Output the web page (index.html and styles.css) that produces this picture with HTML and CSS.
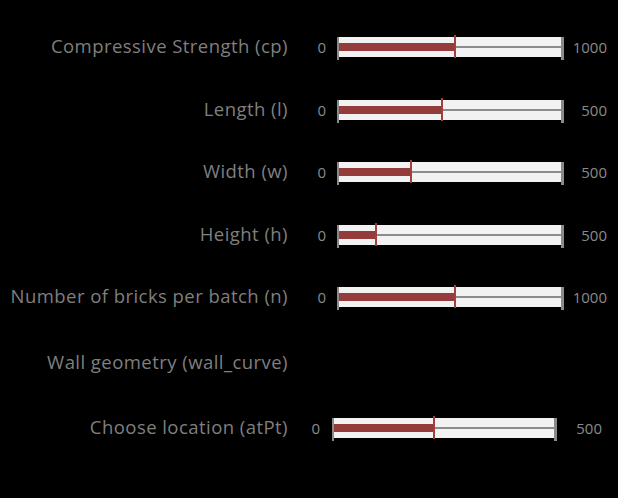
FILE: index.html
```html
<!DOCTYPE html>
<html lang="en">

<head>
    <meta charset="UTF-8">
    <meta name="viewport" content="width=device-width, initial-scale=1.0">
    <title>Brick wall parameters</title>
    <link rel="stylesheet" href="styles.css">
</head>

<body>
    <div class="panel">
        <!-- sliders -->
        <div class="row">
            <div class="label">Compressive Strength (cp)</div>
            <div class="min">0</div>
            <div class="track">
                <div class="fill" style="width: 52%"></div>
                <div class="rest"></div>
            </div>
            <div class="max">1000</div>
        </div>
        <div class="row">
            <div class="label">Length (l)</div>
            <div class="min">0</div>
            <div class="track">
                <div class="fill" style="width: 46%"></div>
                <div class="rest"></div>
            </div>
            <div class="max">500</div>
        </div>
        <div class="row">
            <div class="label">Width (w)</div>
            <div class="min">0</div>
            <div class="track">
                <div class="fill" style="width: 32%"></div>
                <div class="rest"></div>
            </div>
            <div class="max">500</div>
        </div>
        <div class="row">
            <div class="label">Height (h)</div>
            <div class="min">0</div>
            <div class="track">
                <div class="fill" style="width: 16%"></div>
                <div class="rest"></div>
            </div>
            <div class="max">500</div>
        </div>
        <div class="row">
            <div class="label">Number of bricks per batch (n)</div>
            <div class="min">0</div>
            <div class="track">
                <div class="fill" style="width: 52%"></div>
                <div class="rest"></div>
            </div>
            <div class="max">1000</div>
        </div>
        <div class="row row-tall">
            <div class="label">Wall geometry (wall_curve)</div>
        </div>
        <div class="row row-alt">
            <div class="label">Choose location (atPt)</div>
            <div class="min">0</div>
            <div class="track">
                <div class="fill" style="width: 45%"></div>
                <div class="rest"></div>
            </div>
            <div class="max">500</div>
        </div>
    </div>
</body>

</html>
```

FILE: styles.css
```css
* {
    margin: 0;
    padding: 0;
}

body {
    background: #000;
    font-family: "Open Sans", "Liberation Sans", sans-serif;
    color: #7f7f7f;
}

.panel {
    padding-top: 16px;
}

.row {
    display: grid;
    grid-template-columns: 288px 49px 227px 54px;
    align-items: center;
    height: 62.5px;
}

.row-tall {
    height: 68px;
}

.label {
    text-align: right;
    font-size: 18.5px;
    font-weight: 500;
    letter-spacing: 0.45px;
    padding-bottom: 3px;
}

.min,
.max {
    font-size: 15px;
    font-weight: 500;
    color: #8a8a8a;
}

.min {
    text-align: right;
    padding-right: 11px;
}

.max {
    text-align: right;
    padding-right: 11px;
}

.track {
    height: 20px;
    background: #f2f2f2;
    border-left: 2px solid #8a8a8a;
    border-right: 3px solid #8a8a8a;
    display: flex;
    align-items: center;
    position: relative;
}

/* ticks go a bit under the track */
.track::before,
.track::after {
    content: "";
    position: absolute;
    top: 20px;
    width: 2px;
    height: 3px;
    background: #8a8a8a;
}

.track::before {
    left: -2px;
}

.track::after {
    right: -3px;
    width: 3px;
}

.fill {
    height: 8px;
    background: #943c3c;
    position: relative;
}

.fill::after {
    content: "";
    position: absolute;
    right: -2px;
    top: -8px;
    width: 2px;
    height: 23px;
    background: #a0403f;
}

.rest {
    flex: 1;
    height: 2px;
    background: #8c8c8c;
}

.row-alt {
    grid-template-columns: 288px 44px 225px 61px;
}

.row-alt .min {
    padding-right: 12px;
}

.row-alt .max {
    padding-right: 16px;
}
```
